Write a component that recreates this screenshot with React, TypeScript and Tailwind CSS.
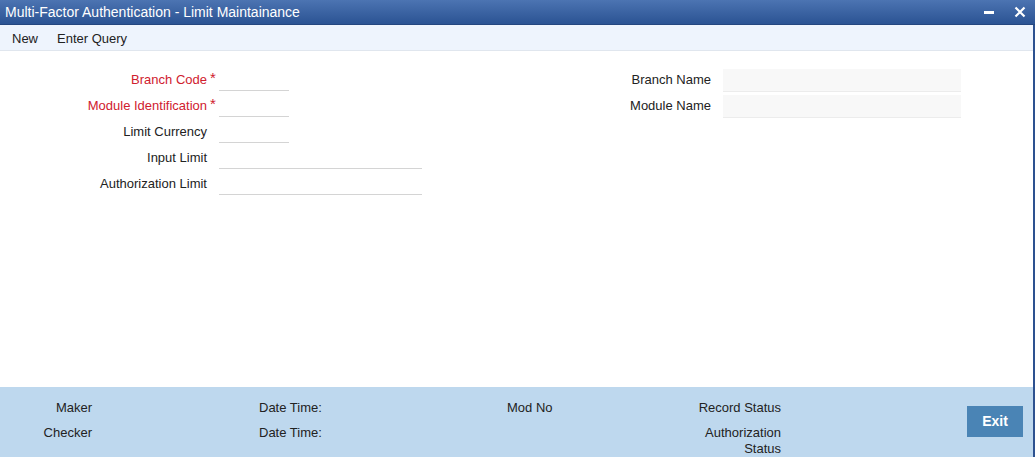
import React from "react";

const font = { fontFamily: '"Liberation Sans", Arial, sans-serif' };

function Field({
  label,
  required,
  wide,
}: {
  label: string;
  required?: boolean;
  wide?: boolean;
}) {
  return (
    <div className="flex h-[26px] items-center">
      <div
        className={`w-[207px] text-right ${required ? "text-[#d0202e]" : "text-[#222]"}`}
      >
        {label}
      </div>
      <div className="w-[12px] self-start pt-[4px] pl-[3px] text-[15px] leading-[14px] text-[#d0202e]">
        {required ? "*" : ""}
      </div>
      <div
        className={`h-[22px] border-b border-[#d4d4d4] bg-white ${wide ? "w-[203px]" : "w-[70px]"}`}
      />
    </div>
  );
}

function ReadField({ label }: { label: string }) {
  return (
    <div className="flex h-[26px] items-center">
      <div className="w-[111px] text-right text-[#222]">{label}</div>
      <div className="ml-[12px] h-[23px] w-[238px] border-b border-[#ececec] bg-[#f8f8f8]" />
    </div>
  );
}

export default function App() {
  return (
    <div
      className="flex h-[457px] w-[1035px] flex-col overflow-hidden bg-white text-[13px] text-[#222]"
      style={font}
    >
      {/* title bar */}
      <div className="flex h-[25px] items-center justify-between border-b border-[#24467f] bg-gradient-to-b from-[#4c74b2] to-[#2b5393] pl-[5px] pr-[9px] text-white">
        <span className="text-[14px]">Multi-Factor Authentication - Limit Maintainance</span>
        <div className="flex items-center gap-[19px]">
          <svg width="11" height="11" viewBox="0 0 11 11">
            <rect x="0" y="4" width="10" height="3" fill="white" />
          </svg>
          <svg width="12" height="12" viewBox="0 0 12 12">
            <path d="M1.5 1.5 L10.5 10.5 M10.5 1.5 L1.5 10.5" stroke="white" strokeWidth="2.2" />
          </svg>
        </div>
      </div>

      <div className="flex flex-1 flex-col border-r-2 border-[#2d5190]">
        {/* toolbar */}
        <div className="flex h-[26px] items-center gap-[19px] border-b border-[#e0e6ee] bg-[#eef4fd] pl-[12px] pt-[2px]">
          <span>New</span>
          <span>Enter Query</span>
        </div>

        {/* form */}
        <div className="flex flex-1 pt-[16px]">
          <div className="flex w-[600px] flex-col">
            <Field label="Branch Code" required />
            <Field label="Module Identification" required />
            <Field label="Limit Currency" />
            <Field label="Input Limit" wide />
            <Field label="Authorization Limit" wide />
          </div>
          <div className="flex flex-col">
            <ReadField label="Branch Name" />
            <ReadField label="Module Name" />
          </div>
        </div>

        {/* footer */}
        <div className="flex h-[70px] bg-[#bed8ee]">
          <div className="flex w-[92px] flex-col gap-[9px] pt-[13px] text-right leading-[16px]">
            <span>Maker</span>
            <span>Checker</span>
          </div>
          <div className="ml-[167px] flex w-[248px] flex-col gap-[9px] pt-[13px] leading-[16px]">
            <span>Date Time:</span>
            <span>Date Time:</span>
          </div>
          <div className="flex w-[190px] flex-col pt-[13px] leading-[16px]">
            <span>Mod No</span>
          </div>
          <div className="flex w-[84px] flex-col gap-[9px] pt-[13px] text-right leading-[16px]">
            <span>Record Status</span>
            <span>Authorization Status</span>
          </div>
          <button className="ml-auto mr-[10px] mt-[19px] h-[31px] w-[56px] bg-[#4a84b5] text-[14px] font-semibold text-white">
            Exit
          </button>
        </div>
      </div>
    </div>
  );
}
